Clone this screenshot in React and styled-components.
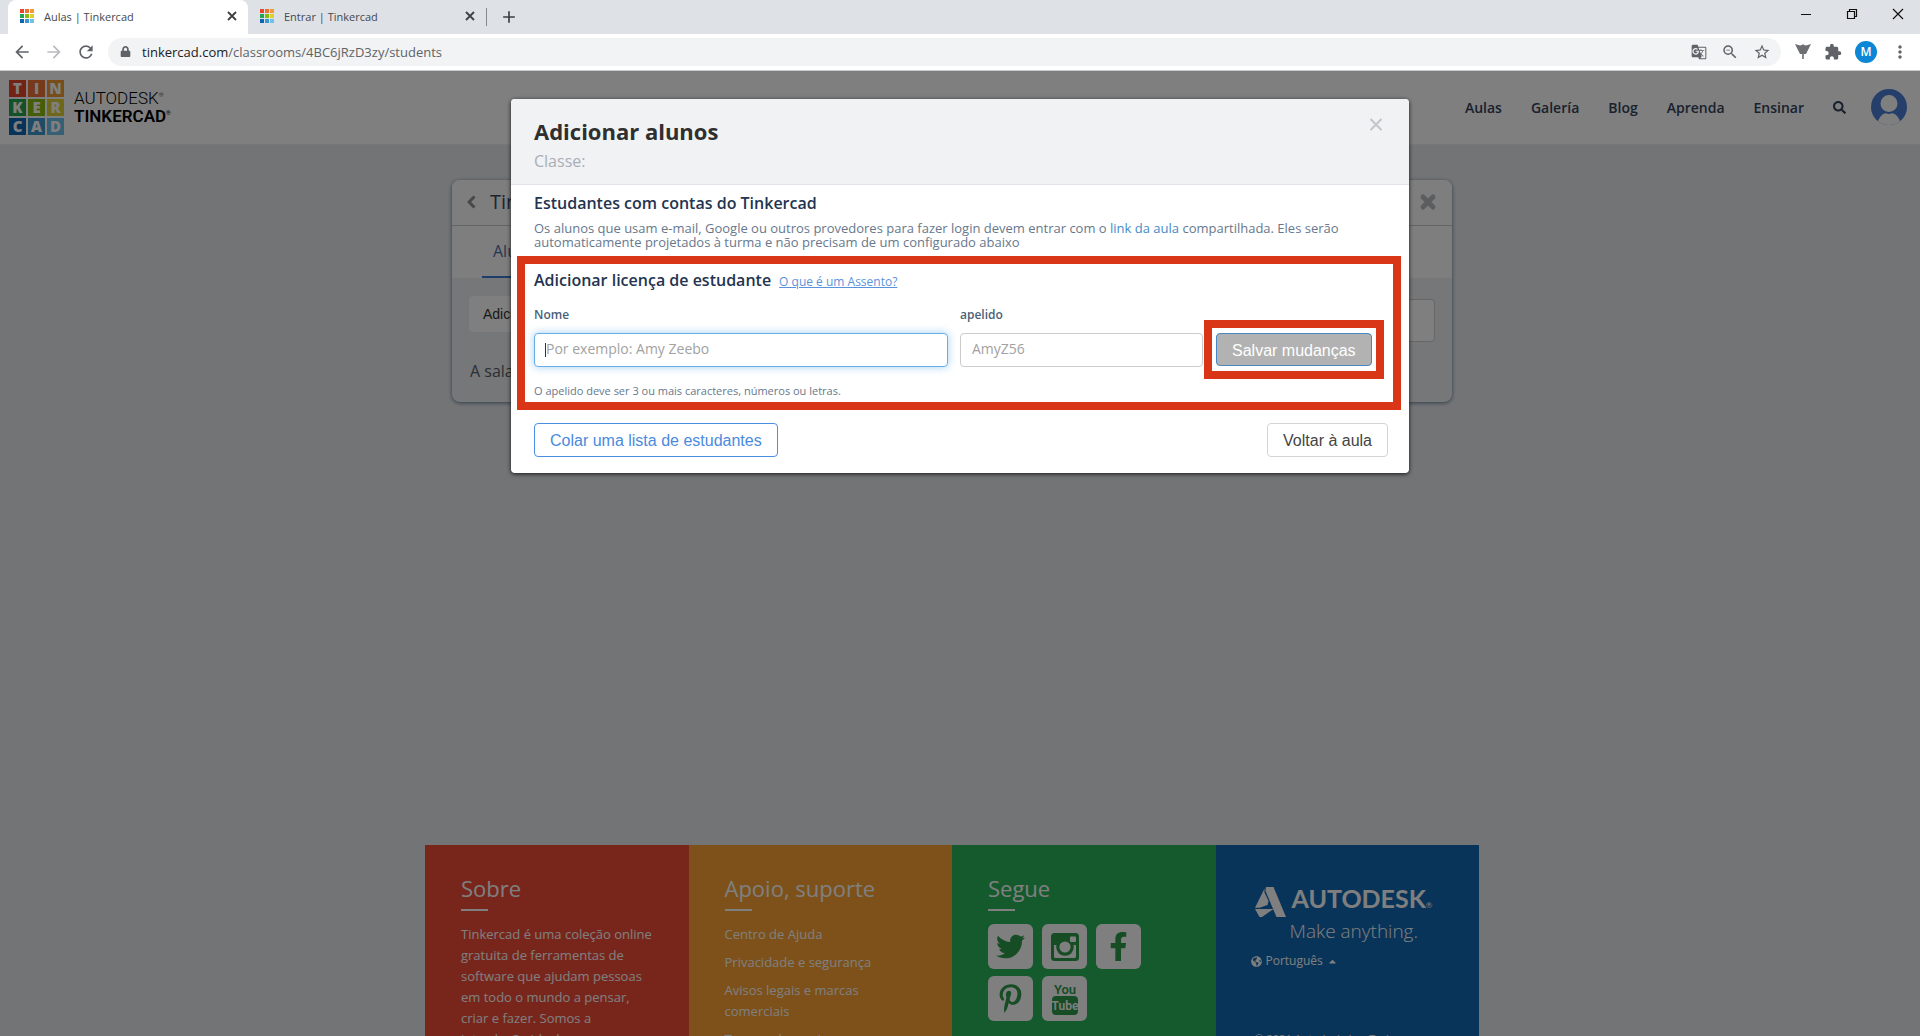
import React from "react";
import styled, { createGlobalStyle } from "styled-components";
import { FaTwitter, FaFacebookF, FaPinterestP, FaSearch, FaGlobeAmericas, FaLock, FaCaretUp } from "react-icons/fa";
import { MdArrowBack, MdArrowForward, MdRefresh, MdExtension, MdMoreVert, MdStarBorder, MdZoomOut, MdAdd, MdGTranslate } from "react-icons/md";

const sans = `"Open Sans", "Noto Sans", sans-serif`;
const arial = `"Liberation Sans", Arial, sans-serif`;

const GlobalStyle = createGlobalStyle`
  * { box-sizing: border-box; }
  body { margin: 0; font-family: ${sans}; font-size: 13px; }
  h1, h2, h3, p, ul { margin: 0; padding: 0; }
  button, input { font-family: inherit; margin: 0; }
  button { cursor: pointer; }
  a { text-decoration: none; }
`;

const Window = styled.div`
  display: flex;
  flex-direction: column;
  height: 100vh;
  overflow: hidden;
`;

/* ---------- browser frame ---------- */

const TabBar = styled.div`
  display: flex;
  align-items: stretch;
  height: 34px;
  padding-left: 8px;
  background: #dee1e6;
`;

const Tab = styled.div`
  display: flex;
  align-items: center;
  gap: 10px;
  width: ${(p) => (p.$active ? 240 : 238)}px;
  padding: 0 10px 2px 12px;
  border-radius: 8px 8px 0 0;
  background: ${(p) => (p.$active ? "#fff" : "transparent")};
  color: #45494d;
  font-size: 11px;
`;

const TabTitle = styled.span`
  flex: 1;
`;

const PlainButton = styled.button`
  display: inline-flex;
  align-items: center;
  justify-content: center;
  padding: 0;
  border: 0;
  background: none;
  color: ${(p) => p.$color || "#5f6368"};
  font-size: ${(p) => p.$size || 20}px;
`;

const NewTab = styled.div`
  display: flex;
  align-items: center;
  align-self: flex-start;
  height: 18px;
  margin-top: 8px;
  padding-left: 12px;
  border-left: 1px solid #85898e;
`;

const WindowControls = styled.div`
  display: flex;
  align-items: center;
  gap: 34px;
  margin-left: auto;
  padding: 0 16px 6px 0;
`;

const ControlIcon = styled.svg`
  width: 12px;
  height: 12px;
  fill: none;
  stroke: #111;
`;

const AddressRow = styled.div`
  display: flex;
  align-items: center;
  height: 37px;
  padding: 0 10px 1px 12px;
  border-bottom: 1px solid #c9cbcd;
  background: #fff;
`;

const NavButtons = styled.div`
  display: flex;
  gap: 12px;
  width: 96px;
`;

const AddressPill = styled.div`
  display: flex;
  flex: 1;
  align-items: center;
  height: 28px;
  padding: 0 10px 0 12px;
  border-radius: 14px;
  background: #f1f3f4;
`;

const Address = styled.span`
  flex: 1;
  margin-left: 11px;
  color: #5f6368;
  font-size: 13px;
  b { color: #202124; font-weight: 400; }
`;

const PillTools = styled.div`
  display: flex;
  gap: 14px;
`;

const Extensions = styled.div`
  display: flex;
  align-items: center;
  gap: 13px;
  margin-left: 14px;
`;

const ProfileBadge = styled.button`
  width: 22px;
  height: 22px;
  padding: 0;
  border: 0;
  border-radius: 50%;
  background: #0b87d6;
  color: #fff;
  font: 600 12px ${sans};
`;

/* ---------- page ---------- */

const Viewport = styled.div`
  position: relative;
  flex: 1;
  overflow: hidden;
  background: #e7e9ec;
`;

const SiteHeader = styled.header`
  display: flex;
  align-items: center;
  justify-content: space-between;
  height: 74px;
  padding: 0 13px 1px 9px;
  border-bottom: 1px solid #eceef0;
  background: #fefeff;
`;

const Brand = styled.a`
  display: flex;
  align-items: center;
  gap: 10px;
  color: #000;
`;

const TileGrid = styled.span`
  display: grid;
  grid-template-columns: repeat(3, ${(p) => (p.$small ? 4 : 17)}px);
  grid-auto-rows: ${(p) => (p.$small ? 4 : 17)}px;
  gap: ${(p) => (p.$small ? 1 : 2)}px;
`;

const Tile = styled.span`
  display: flex;
  align-items: center;
  justify-content: center;
  background: ${(p) => p.$color};
  color: #fff;
  font: 800 15px/17px ${sans};
`;

const BrandName = styled.span`
  display: flex;
  flex-direction: column;
  line-height: 18px;
  font-size: 17px;
  font-family: Roboto, ${sans};
  font-weight: 300;
  b { font-weight: 600; }
  sup { font-size: 6px; line-height: 6px; vertical-align: 7px; }
`;

const SiteNav = styled.nav`
  display: flex;
  align-items: center;
  gap: 29px;
`;

const SiteLink = styled.a`
  color: #34435a;
  font-size: 14px;
  font-weight: 600;
`;

const Account = styled.button`
  display: flex;
  margin-left: -4px;
  padding: 0;
  border: 0;
  background: none;
`;

const Main = styled.main`
  min-height: 700px;
  padding: 35px 16px 0 0;
`;

const ClassCard = styled.section`
  width: 1000px;
  max-width: 100%;
  margin: 0 auto;
  border-radius: 8px;
  background: #eceef0;
  box-shadow: 0 1px 4px #5f7d92;
  overflow: hidden;
`;

const CardTop = styled.div`
  display: flex;
  align-items: center;
  gap: 14px;
  height: 46px;
  padding: 0 15px 2px;
  border-bottom: 1px solid #c4c8cc;
  background: #fcfdfe;
`;

const CardTitle = styled.h2`
  flex: 1;
  color: #3c4a5e;
  font-size: 20px;
  font-weight: 400;
`;

const CardTabs = styled.div`
  display: flex;
  height: 52px;
  padding-left: 30px;
  background: #fcfdfe;
`;

const CardTab = styled.a`
  padding: 14px 11px 0;
  border-bottom: 2px solid #3c78d8;
  color: #4d6fa5;
  font-size: 16px;
`;

const CardTools = styled.div`
  display: flex;
  align-items: center;
  justify-content: space-between;
  height: 64px;
  margin-top: 10px;
  padding: 0 17px;
`;

const AddButton = styled.button`
  height: 36px;
  margin-bottom: 12px;
  padding: 0 14px;
  border: 0;
  border-radius: 4px;
  background: #fff;
  color: #333;
  font: 14px ${arial};
`;

const CardSearch = styled.input`
  width: 240px;
  height: 43px;
  border: 1px solid #ccc;
  border-radius: 4px;
  background: #fff;
`;

const CardText = styled.p`
  padding: 8px 18px 20px;
  color: #555d66;
  font-size: 16px;
  line-height: 22px;
`;

const SiteFooter = styled.footer`
  display: grid;
  grid-template-columns: repeat(4, 1fr);
  width: 1054px;
  max-width: 100%;
  margin: 0 auto;
`;

const FooterWrap = styled.div`
  padding-right: 16px;
`;

const FooterColumn = styled.section`
  min-height: 300px;
  padding: 28px 36px;
  background: ${(p) => p.$color};
  color: #fff;
`;

const FooterTitle = styled.h3`
  margin-bottom: 13px;
  font-size: 22px;
  font-weight: 400;
  line-height: 30px;
  &::after {
    content: "";
    display: block;
    width: 27px;
    height: 2px;
    margin-top: 6px;
    background: #fff;
  }
`;

const FooterText = styled.p`
  font-size: 13px;
  line-height: 21px;
`;

const FooterLinks = styled.ul`
  display: flex;
  flex-direction: column;
  gap: 7px;
  list-style: none;
  font-size: 13px;
  line-height: 21px;
  a { color: #fff; }
`;

const SocialGrid = styled.div`
  display: flex;
  flex-wrap: wrap;
  gap: 7px 9px;
`;

const SocialLink = styled.a`
  display: flex;
  align-items: center;
  justify-content: center;
  width: 45px;
  height: 45px;
  border-radius: 6px;
  background: #fff;
  color: #2c9a4b;
  font-size: 29px;
`;

const Corporate = styled.div`
  display: flex;
  flex-direction: column;
  padding: 10px 0 0 3px;
`;

const CorporateLogo = styled.a`
  display: flex;
  align-items: center;
  gap: 6px;
  height: 37px;
  color: #fff;
  font: 700 25px/30px Lato, ${sans};
  small { font-size: 8px; font-weight: 400; }
`;

const Motto = styled.p`
  padding-left: 35px;
  font-size: 19px;
  font-weight: 300;
  line-height: 22px;
`;

const Language = styled.button`
  display: flex;
  align-items: center;
  gap: 4px;
  margin: 9px 0 60px -4px;
  padding: 0;
  border: 0;
  background: none;
  color: #fff;
  font-size: 12px;
  line-height: 20px;
`;

const Copyright = styled.p`
  font-size: 11px;
  line-height: 16px;
`;

/* ---------- dialog ---------- */

const Scrim = styled.div`
  position: absolute;
  inset: 0;
  display: flex;
  align-items: flex-start;
  justify-content: center;
  padding-top: 28px;
  background: rgba(0, 0, 0, 0.5);
`;

const Dialog = styled.section`
  width: 898px;
  max-width: 100%;
  border-radius: 4px;
  background: #fff;
  box-shadow: 0 1px 4px rgba(0, 0, 0, 0.8);
  overflow: hidden;
`;

const DialogHeader = styled.header`
  display: flex;
  align-items: flex-start;
  justify-content: space-between;
  padding: 17px 26px 13px 23px;
  border-bottom: 1px solid #e1e4e8;
  background: #f1f2f4;
`;

const DialogTitle = styled.h1`
  margin-bottom: 5px;
  color: #2f2f2f;
  font-size: 22px;
  font-weight: 700;
  line-height: 30px;
`;

const DialogSubtitle = styled.p`
  color: #a9aeb8;
  font-size: 16px;
  line-height: 20px;
`;

const DialogBody = styled.div`
  padding: 7px 23px 0;
`;

const SectionTitle = styled.h2`
  color: #243450;
  font-size: 16px;
  font-weight: 600;
  line-height: 22px;
`;

const Intro = styled.p`
  margin: 7px 0;
  color: #67788d;
  font-size: 13px;
  line-height: 14px;
  a { color: #428bca; }
`;

const Highlight = styled.div`
  border: 8px solid #d93617;
`;

const SeatSection = styled(Highlight)`
  margin: 0 -15px 0 -17px;
  padding: 5px 8px 3px 9px;
`;

const SeatHeading = styled.div`
  display: flex;
  align-items: baseline;
  gap: 8px;
  line-height: 16px;
  a { color: #5b93da; font-size: 12px; text-decoration: underline; }
`;

const SeatForm = styled.form`
  display: flex;
  align-items: flex-start;
  margin-top: 15px;
`;

const Field = styled.label`
  display: flex;
  flex: 0 1 ${(p) => p.$width}px;
  flex-direction: column;
  gap: 9px;
  margin-right: ${(p) => p.$after}px;
  color: #4b5f78;
  font-size: 12px;
  font-weight: 600;
  line-height: 18px;
`;

const TextInput = styled.input`
  width: 100%;
  height: 34px;
  padding: 0 11px 3px;
  border: 1px solid ${(p) => (p.$focused ? "#66afe9" : "#ccc")};
  border-radius: 4px;
  outline: 0;
  background: #fff;
  box-shadow: ${(p) => (p.$focused ? "0 0 8px rgba(102, 175, 233, 0.6)" : "none")};
  font-size: 14px;
  ${(p) => p.$focused && "background: linear-gradient(#333, #333) 10px 9px / 1px 14px no-repeat #fff;"}
  &::placeholder { color: #a2a2a2; opacity: 1; }
`;

const SaveHighlight = styled(Highlight)`
  display: flex;
  margin-top: 14px;
  padding: 5px 4px;
`;

const Button = styled.button`
  height: ${(p) => (p.$compact ? 33 : 34)}px;
  padding: 2px 15px 0;
  border: 1px solid ${(p) => p.$border};
  border-radius: 4px;
  background: ${(p) => p.$fill || "#fff"};
  color: ${(p) => p.$color};
  font: 16px ${arial};
  white-space: nowrap;
`;

const Hint = styled.p`
  margin-top: 4px;
  color: #67788d;
  font-size: 11px;
  line-height: 16px;
`;

const DialogActions = styled.footer`
  display: flex;
  justify-content: space-between;
  padding: 13px 21px 16px 23px;
`;

const TILES = [
  ["T", "#e8442c"], ["I", "#ee7236"], ["N", "#f29a35"],
  ["K", "#24a452"], ["E", "#88bd0e"], ["R", "#dfcf33"],
  ["C", "#0a66b2"], ["A", "#3e97cf"], ["D", "#6cc0ea"],
];

function TinkerTiles({ small }) {
  return (
    <TileGrid $small={small}>
      {TILES.map(([letter, color]) => (
        <Tile key={letter + color} $color={color}>{small ? null : letter}</Tile>
      ))}
    </TileGrid>
  );
}

function BrowserTab({ title, active }) {
  return (
    <Tab $active={active}>
      <TinkerTiles small />
      <TabTitle>{title}</TabTitle>
      <PlainButton $color="#3c4043" aria-label="Fechar guia">
        <svg width="12" height="12" viewBox="0 0 12 12" stroke="currentColor" strokeWidth="1.800"><path d="M2 2l8 8M10 2l-8 8" /></svg>
      </PlainButton>
    </Tab>
  );
}

function Browser() {
  return (
    <>
      <TabBar>
        <BrowserTab title="Aulas | Tinkercad" active />
        <BrowserTab title="Entrar | Tinkercad" />
        <NewTab><PlainButton $size={20} $color="#3c4043" aria-label="Nova guia"><MdAdd /></PlainButton></NewTab>
        <WindowControls>
          <ControlIcon viewBox="0 0 12 12"><path d="M1 6.5h10" /></ControlIcon>
          <ControlIcon viewBox="0 0 12 12"><path d="M1.500 3.500h7v7h-7zM3.500 3.500v-2h7v7h-2" strokeWidth="1.2" /></ControlIcon>
          <ControlIcon viewBox="0 0 12 12"><path d="M1 1l10 10M11 1L1 11" strokeWidth="1.2" /></ControlIcon>
        </WindowControls>
      </TabBar>
      <AddressRow>
        <NavButtons>
          <PlainButton aria-label="Voltar"><MdArrowBack /></PlainButton>
          <PlainButton $color="#b8babd" aria-label="Avançar"><MdArrowForward /></PlainButton>
          <PlainButton aria-label="Recarregar"><MdRefresh /></PlainButton>
        </NavButtons>
        <AddressPill>
          <FaLock size={11} color="#5f6368" />
          <Address><b>tinkercad.com</b>/classrooms/4BC6jRzD3zy/students</Address>
          <PillTools>
            <PlainButton $size={16} aria-label="Traduzir"><MdGTranslate /></PlainButton>
            <PlainButton $size={18} aria-label="Zoom"><MdZoomOut /></PlainButton>
            <PlainButton $size={18} aria-label="Favorito"><MdStarBorder /></PlainButton>
          </PillTools>
        </AddressPill>
        <Extensions>
          <PlainButton aria-label="Extensão">
            <svg width="16" height="16" viewBox="0 0 16 16" fill="#6d6f72">
              <path d="M0 0l5 1.500L7 1l1-1 1 1 2 .5L16 0l-5 10H8.800v5H7.200v-5H5z" />
            </svg>
          </PlainButton>
          <PlainButton $size={18} aria-label="Extensões"><MdExtension /></PlainButton>
          <ProfileBadge>M</ProfileBadge>
          <PlainButton $size={20} aria-label="Menu"><MdMoreVert /></PlainButton>
        </Extensions>
      </AddressRow>
    </>
  );
}

function Header() {
  return (
    <SiteHeader>
      <Brand href="#">
        <TinkerTiles />
        <BrandName>
          <span>AUTODESK<sup>®</sup></span>
          <b>TINKERCAD<sup>®</sup></b>
        </BrandName>
      </Brand>
      <SiteNav>
        {["Aulas", "Galería", "Blog", "Aprenda", "Ensinar"].map((label) => (
          <SiteLink key={label} href="#">{label}</SiteLink>
        ))}
        <PlainButton $size={13} $color="#34435a" aria-label="Pesquisar"><FaSearch /></PlainButton>
        <Account aria-label="Conta">
          <svg width="36" height="36" viewBox="0 0 36 36">
            <clipPath id="avatar"><circle cx="18" cy="18" r="18" /></clipPath>
            <g clipPath="url(#avatar)">
              <rect width="36" height="36" fill="#4a7fd4" />
              <ellipse cx="18" cy="36" rx="11.500" ry="12.500" fill="#fff" />
              <circle cx="18" cy="14.500" r="9.500" fill="#fff" stroke="#4a7fd4" strokeWidth="2" />
            </g>
          </svg>
        </Account>
      </SiteNav>
    </SiteHeader>
  );
}

function InstagramCamera() {
  return (
    <svg width="28" height="28" viewBox="0 0 28 28">
      <rect width="28" height="28" rx="3.500" fill="#2c9a4b" />
      <path d="M3 12h22v11.500a1.500 1.500 0 0 1-1.500 1.500h-19A1.500 1.500 0 0 1 3 23.500z" fill="#fff" />
      <circle cx="14" cy="14" r="8.800" fill="#2c9a4b" />
      <circle cx="14" cy="14" r="5.600" fill="#fff" />
      <rect x="19" y="3.500" width="6" height="5.500" rx="1" fill="#fff" />
    </svg>
  );
}

function YouTubeMark() {
  return (
    <svg width="28" height="34" viewBox="0 0 28 34" fontFamily="'Liberation Sans Narrow', Roboto, sans-serif" fontWeight="600" textAnchor="middle">
      <text x="14" y="12" fontSize="13" fill="#2c9a4b">You</text>
      <rect x="1" y="14" width="26" height="19" rx="4" fill="#2c9a4b" />
      <text x="14" y="28" fontSize="12" fill="#fff">Tube</text>
    </svg>
  );
}

function Footer() {
  return (
    <FooterWrap>
      <SiteFooter>
        <FooterColumn $color="#f04c38">
          <FooterTitle>Sobre</FooterTitle>
          <FooterText>
            Tinkercad é uma coleção online gratuita de ferramentas de software que ajudam pessoas em todo o mundo a pensar, criar e fazer. Somos a introdução ideal para a Autodesk.
          </FooterText>
        </FooterColumn>
        <FooterColumn $color="#faa233">
          <FooterTitle>Apoio, suporte</FooterTitle>
          <FooterLinks>
            {["Centro de Ajuda", "Privacidade e segurança", "Avisos legais e marcas comerciais", "Termos de serviço"].map((label) => (
              <li key={label}><a href="#">{label}</a></li>
            ))}
          </FooterLinks>
        </FooterColumn>
        <FooterColumn $color="#28b45a">
          <FooterTitle>Segue</FooterTitle>
          <SocialGrid>
            <SocialLink href="#" aria-label="Twitter"><FaTwitter /></SocialLink>
            <SocialLink href="#" aria-label="Instagram"><InstagramCamera /></SocialLink>
            <SocialLink href="#" aria-label="Facebook"><FaFacebookF /></SocialLink>
            <SocialLink href="#" aria-label="Pinterest"><FaPinterestP /></SocialLink>
            <SocialLink href="#" aria-label="YouTube"><YouTubeMark /></SocialLink>
          </SocialGrid>
        </FooterColumn>
        <FooterColumn $color="#1268b3">
          <Corporate>
            <CorporateLogo href="#">
              <svg width="31" height="30" viewBox="0 0 31 30" fill="#fff">
                <path d="M11 0h7.500L31 30h-9.500L10.500 4z" />
                <path d="M9.500 1.500v4L13.500 14 12.500 18 4.500 20.800H0z" />
                <path d="M0 22h18.500L7 30H4.500z" />
              </svg>
              <span>AUTODESK<small>®</small></span>
            </CorporateLogo>
            <Motto>Make anything.</Motto>
            <Language>
              <FaGlobeAmericas size={11} />
              <span>Português</span>
              <FaCaretUp size={11} />
            </Language>
            <Copyright>© 2021 Autodesk, Inc. Todos</Copyright>
          </Corporate>
        </FooterColumn>
      </SiteFooter>
    </FooterWrap>
  );
}

function AddStudentsDialog() {
  return (
    <Dialog role="dialog" aria-labelledby="dialog-title">
      <DialogHeader>
        <div>
          <DialogTitle id="dialog-title">Adicionar alunos</DialogTitle>
          <DialogSubtitle>Classe:</DialogSubtitle>
        </div>
        <PlainButton $size={16} $color="#c3c5c8" aria-label="Fechar">
          <svg width="14" height="16" viewBox="0 0 14 16" stroke="currentColor" strokeWidth="2"><path d="M1.500 3l11 11M12.500 3l-11 11" /></svg>
        </PlainButton>
      </DialogHeader>
      <DialogBody>
        <SectionTitle>Estudantes com contas do Tinkercad</SectionTitle>
        <Intro>
          Os alunos que usam e-mail, Google ou outros provedores para fazer login devem entrar com o <a href="#">link da aula</a> compartilhada. Eles serão automaticamente projetados à turma e não precisam de um configurado abaixo
        </Intro>
        <SeatSection>
          <SeatHeading>
            <SectionTitle>Adicionar licença de estudante</SectionTitle>
            <a href="#">O que é um Assento?</a>
          </SeatHeading>
          <SeatForm onSubmit={(e) => e.preventDefault()}>
            <Field $width={414} $after={12}>
              Nome
              <TextInput $focused placeholder="Por exemplo: Amy Zeebo" />
            </Field>
            <Field $width={243} $after={1}>
              apelido
              <TextInput placeholder="AmyZ56" />
            </Field>
            <SaveHighlight>
              <Button $compact $border="#4a86c0" $fill="#b2b2b2" $color="#fff">Salvar mudanças</Button>
            </SaveHighlight>
          </SeatForm>
          <Hint>O apelido deve ser 3 ou mais caracteres, números ou letras.</Hint>
        </SeatSection>
      </DialogBody>
      <DialogActions>
        <Button $border="#4a90e2" $color="#4a8ae0">Colar uma lista de estudantes</Button>
        <Button $border="#d4d4d4" $color="#444">Voltar à aula</Button>
      </DialogActions>
    </Dialog>
  );
}

export default function App() {
  return (
    <Window>
      <GlobalStyle />
      <Browser />
      <Viewport>
        <Header />
        <Main>
          <ClassCard>
            <CardTop>
              <svg width="9" height="14" viewBox="0 0 9 14" fill="none" stroke="#8a8e93" strokeWidth="3"><path d="M7.500 1.500L2 7l5.500 5.500" /></svg>
              <CardTitle>Tinkercad</CardTitle>
              <svg width="18" height="18" viewBox="0 0 18 18" stroke="#b8bbbf" strokeWidth="5" strokeLinecap="round"><path d="M4 4l10 10M14 4L4 14" /></svg>
            </CardTop>
            <CardTabs><CardTab href="#">Alunos</CardTab></CardTabs>
            <CardTools>
              <AddButton>Adicionar alunos</AddButton>
              <CardSearch aria-label="Pesquisar alunos" />
            </CardTools>
            <CardText>A sala de aula está vazia.</CardText>
          </ClassCard>
        </Main>
        <Footer />
        <Scrim><AddStudentsDialog /></Scrim>
      </Viewport>
    </Window>
  );
}
